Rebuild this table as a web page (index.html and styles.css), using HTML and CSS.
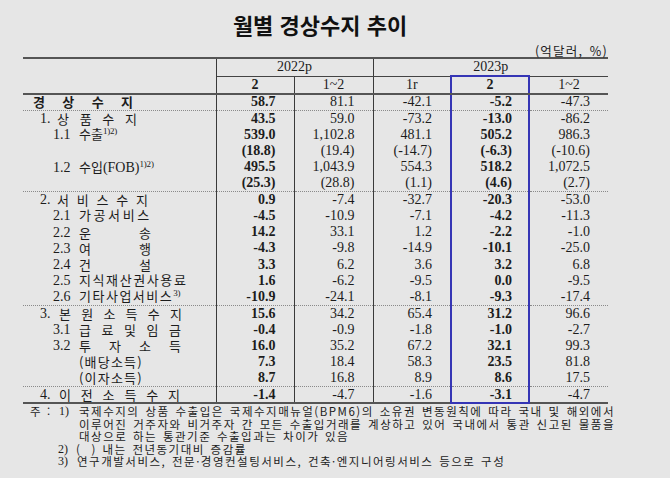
FILE: index.html
```html
<!DOCTYPE html>
<html lang="ko">
<head>
<meta charset="utf-8">
<title>월별 경상수지 추이</title>
<link rel="stylesheet" href="styles.css">
</head>
<body>
<div class="page">
  <h1 class="title">월별 경상수지 추이</h1>
  <div class="unit">(억달러, %)</div>
  <table class="bop">
    <colgroup>
      <col class="c-lab"><col class="c-n1"><col class="c-n2"><col class="c-n3"><col class="c-n4"><col class="c-n5">
    </colgroup>
    <thead>
      <tr class="hr1">
        <th rowspan="2" class="h-lab"></th>
        <th colspan="2" class="h-y22">2022p</th>
        <th colspan="3" class="h-y23">2023p</th>
      </tr>
      <tr class="hr2">
        <th class="b">2</th><th>1~2</th><th>1r</th><th class="b">2</th><th>1~2</th>
      </tr>
    </thead>
    <tbody>
      <tr class="sep"><td class="lab l0"><span class="jt w100 bold">경 상 수 지</span></td><td>58.7</td><td>81.1</td><td>-42.1</td><td>-5.2</td><td>-47.3</td></tr>
      <tr><td class="lab l1"><span class="num">1.</span><span class="jt w80">상 품 수 지</span></td><td>43.5</td><td>59.0</td><td>-73.2</td><td>-13.0</td><td>-86.2</td></tr>
      <tr><td class="lab l2"><span class="num">1.1</span>수출<sup>1)2)</sup></td><td>539.0</td><td>1,102.8</td><td>481.1</td><td>505.2</td><td>986.3</td></tr>
      <tr><td class="lab"></td><td>(18.8)</td><td>(19.4)</td><td>(-14.7)</td><td>(-6.3)</td><td>(-10.6)</td></tr>
      <tr><td class="lab l2"><span class="num">1.2</span>수입<span class="lat">(FOB)</span><sup>1)2)</sup></td><td>495.5</td><td>1,043.9</td><td>554.3</td><td>518.2</td><td>1,072.5</td></tr>
      <tr class="sep"><td class="lab"></td><td>(25.3)</td><td>(28.8)</td><td>(1.1)</td><td>(4.6)</td><td>(2.7)</td></tr>
      <tr><td class="lab l1"><span class="num">2.</span><span class="jt w91">서 비 스 수 지</span></td><td>0.9</td><td>-7.4</td><td>-32.7</td><td>-20.3</td><td>-53.0</td></tr>
      <tr><td class="lab l2"><span class="num">2.1</span><span class="ls25">가공서비스</span></td><td>-4.5</td><td>-10.9</td><td>-7.1</td><td>-4.2</td><td>-11.3</td></tr>
      <tr><td class="lab l2"><span class="num">2.2</span><span class="jt w72">운 송</span></td><td>14.2</td><td>33.1</td><td>1.2</td><td>-2.2</td><td>-1.0</td></tr>
      <tr><td class="lab l2"><span class="num">2.3</span><span class="jt w72">여 행</span></td><td>-4.3</td><td>-9.8</td><td>-14.9</td><td>-10.1</td><td>-25.0</td></tr>
      <tr><td class="lab l2"><span class="num">2.4</span><span class="jt w72">건 설</span></td><td>3.3</td><td>6.2</td><td>3.6</td><td>3.2</td><td>6.8</td></tr>
      <tr><td class="lab l2"><span class="num">2.5</span><span class="ls16">지식재산권사용료</span></td><td>1.6</td><td>-6.2</td><td>-9.5</td><td>0.0</td><td>-9.5</td></tr>
      <tr class="sep"><td class="lab l2"><span class="num">2.6</span><span class="ls10">기타사업서비스</span><sup>3)</sup></td><td>-10.9</td><td>-24.1</td><td>-8.1</td><td>-9.3</td><td>-17.4</td></tr>
      <tr><td class="lab l1"><span class="num wide">3.</span><span class="jt w123">본 원 소 득 수 지</span></td><td>15.6</td><td>34.2</td><td>65.4</td><td>31.2</td><td>96.6</td></tr>
      <tr><td class="lab l2"><span class="num">3.1</span><span class="jt w102">급 료 및 임 금</span></td><td>-0.4</td><td>-0.9</td><td>-1.8</td><td>-1.0</td><td>-2.7</td></tr>
      <tr><td class="lab l2"><span class="num">3.2</span><span class="jt w102">투 자 소 득</span></td><td>16.0</td><td>35.2</td><td>67.2</td><td>32.1</td><td>99.3</td></tr>
      <tr><td class="lab l2"><span class="num"></span><span class="ls12">(배당소득)</span></td><td>7.3</td><td>18.4</td><td>58.3</td><td>23.5</td><td>81.8</td></tr>
      <tr class="sep"><td class="lab l2"><span class="num"></span><span class="ls12">(이자소득)</span></td><td>8.7</td><td>16.8</td><td>8.9</td><td>8.6</td><td>17.5</td></tr>
      <tr class="last"><td class="lab l1"><span class="num wide">4.</span><span class="jt w121">이 전 소 득 수 지</span></td><td>-1.4</td><td>-4.7</td><td>-1.6</td><td>-3.1</td><td>-4.7</td></tr>
    </tbody>
  </table>
  <div class="notes">
    <div class="nline"><span class="ju">주</span><span class="colon">:</span><span class="nn">1)</span><span class="nt full">국제수지의 상품 수출입은 국제수지매뉴얼(BPM6)의 소유권 변동원칙에 따라 국내 및 해외에서</span></div>
    <div class="nline cont"><span class="nt full">이루어진 거주자와 비거주자 간 모든 수출입거래를 계상하고 있어 국내에서 통관 신고된 물품을</span></div>
    <div class="nline cont"><span class="nt">대상으로 하는 통관기준 수출입과는 차이가 있음</span></div>
    <div class="nline sub"><span class="nn n2">2)</span><span class="nt">(<span class="gap"></span>) 내는 전년동기대비 증감률</span></div>
    <div class="nline sub"><span class="nn n3">3)</span><span class="nt">연구개발서비스, 전문·경영컨설팅서비스, 건축·엔지니어링서비스 등으로 구성</span></div>
  </div>
</div>
</body>
</html>
```

FILE: styles.css
```css
html, body {
  margin: 0;
  padding: 0;
  background: #e6e6e6;
}
body {
  width: 670px;
  height: 478px;
  overflow: hidden;
  color: #1c1c1c;
  font-family: "Noto Sans CJK KR", "Noto Sans", sans-serif;
}
.page {
  padding-left: 23px;
  width: 585px;
}
.title {
  margin: 6px 0 0 9px;
  height: 36px;
  line-height: 36px;
  font-size: 22px;
  font-weight: 700;
  text-align: center;
  color: #111;
}
.unit {
  margin-top: 2px;
  height: 13px;
  line-height: 13px;
  font-size: 12.5px;
  text-align: right;
  letter-spacing: 1.2px;
  word-spacing: 2px;
}
.bop {
  border-collapse: collapse;
  table-layout: fixed;
  width: 585px;
  border-top: 2px solid #555;
  border-bottom: 2px solid #555;
}
.c-lab { width: 193px; }
.c-n1 { width: 78px; }
.c-n2 { width: 79px; }
.c-n3 { width: 78px; }
.c-n4 { width: 78px; }
.c-n5 { width: 79px; }

.bop th {
  font-family: "Liberation Serif", serif;
  font-weight: 400;
  font-size: 14px;
  line-height: 14px;
  padding: 0;
  height: 16px;
  text-align: center;
}
.bop th.b { font-weight: 700; }
.h-lab { border-right: 1px solid #3a3a3a; border-bottom: 2px solid #555; }
.h-y22 { border-right: 1px solid #3a3a3a; border-bottom: 1px solid #444; }
.h-y23 { border-bottom: 1px solid #444; }
.hr2 th { border-bottom: 2px solid #555; }
.hr2 th:nth-child(1), .hr2 th:nth-child(2) { border-right: 1px solid #3a3a3a; }
.hr2 th:nth-child(4) {
  border-left: 2px solid #3535b5;
  border-right: 2px solid #3535b5;
  border-top: 2px solid #3535b5;
}

.bop tbody tr { height: 16.26px; }
.bop td {
  padding: 0 18px 0 0;
  font-family: "Liberation Serif", serif;
  font-size: 14px;
  line-height: 14px;
  text-align: right;
  white-space: nowrap;
}
.bop td:nth-child(1), .bop td:nth-child(2), .bop td:nth-child(3) {
  border-right: 1px solid #3a3a3a;
}
.bop td:nth-child(2), .bop td:nth-child(5) { font-weight: 700; }
.bop td:nth-child(5) {
  border-left: 2px solid #3535b5;
  border-right: 2px solid #3535b5;
  padding-right: 16px;
}
.bop tr.last td:nth-child(5) { border-bottom: 2px solid #3535b5; }
.bop tr.sep td { border-bottom: 1px dotted #8a8a8a; }

.bop td.lab {
  text-align: left;
  padding: 0;
  font-family: "Noto Sans CJK KR", sans-serif;
  font-size: 13px;
  font-weight: 400;
}
.l0 { padding-left: 10px !important; }
.l1 { padding-left: 17px !important; }
.l2 { padding-left: 30px !important; }
.num {
  display: inline-block;
  font-family: "Liberation Serif", serif;
  font-size: 14px;
}
.l1 .num { width: 17px; }
.l1 .num.wide { width: 19px; }
.l2 .num { width: 26px; }
.jt {
  display: inline-block;
  text-align: justify;
  text-align-last: justify;
  white-space: normal;
  vertical-align: bottom;
}
.bold { font-weight: 700; }
.w100 { width: 100px; }
.w80 { width: 80px; }
.w91 { width: 91px; }
.w123 { width: 123px; }
.w121 { width: 121px; }
.w72 { width: 72px; }
.w102 { width: 102px; }
.ls25 { letter-spacing: 2.6px; }
.ls16 { letter-spacing: 1.6px; }
.ls10 { letter-spacing: 1.5px; }
.ls12 { letter-spacing: 1.2px; }
.lat { font-family: "Liberation Serif", serif; font-size: 14px; }
.lab sup {
  font-family: "Liberation Serif", serif;
  font-size: 9px;
  line-height: 0;
  vertical-align: 5px;
  letter-spacing: -0.2px;
}

.notes {
  margin-top: 1px;
  padding-left: 7px;
  font-size: 11.5px;
  line-height: 12.5px;
  letter-spacing: 1.5px;
  word-spacing: 1px;
}
.nline {
  display: flex;
  height: 12.5px;
  white-space: nowrap;
}
.nline > span { flex-shrink: 0; }
.ju { width: 17px; }
.colon { width: 12px; }
.nn {
  width: 20px;
  font-family: "Liberation Serif", serif;
  font-size: 12px;
  letter-spacing: 0;
}
.nn.n2 { width: 18px; }
.nn.n3 { width: 19px; }
.gap { display: inline-block; width: 10px; }
.nline.cont { padding-left: 49px; }
.nline.sub { padding-left: 28px; }
.nt.full {
  width: 536px;
  text-align: justify;
  text-align-last: justify;
}
```
